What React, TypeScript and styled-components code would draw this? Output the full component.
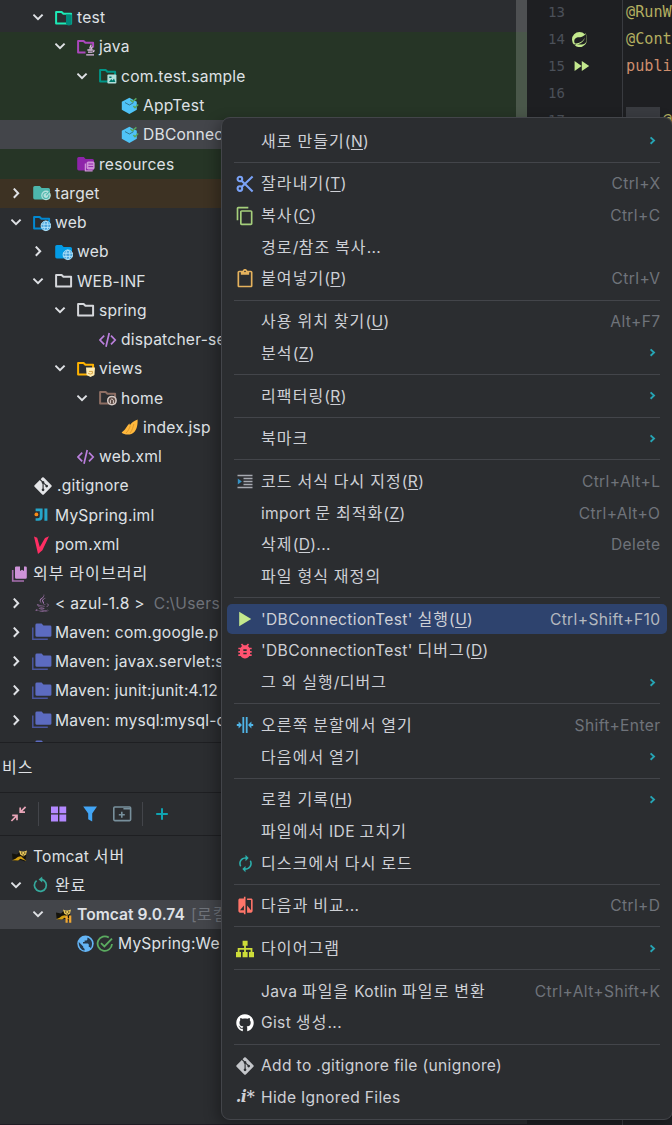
import React from 'react';
import styled, { createGlobalStyle, ThemeProvider } from 'styled-components';
import { MdAutorenew, MdBugReport, MdCompare, MdContentCopy, MdContentPaste } from 'react-icons/md';
import { FaGitAlt, FaGithub, FaJava } from 'react-icons/fa';
import { SiSpring } from 'react-icons/si';

const theme = {
  panel: '#2b2d30',
  editor: '#1e1f22',
  line: '#1e1f22',
  border: '#43454a',
  text: '#dfe1e5',
  menuText: '#ced0d6',
  muted: '#6f737a',
  selected: '#43454a',
  highlight: '#2e436e',
  test: '#263526',
  excluded: '#3d3223',
};

const GlobalStyle = createGlobalStyle`
  body {
    margin: 0;
    background: #1e1f22;
    overflow: hidden;
  }

  * {
    box-sizing: border-box;
  }

  svg {
    display: block;
    flex: none;
  }
`;

const Window = styled.div`
  position: relative;
  display: grid;
  grid-template-columns: 527px 1fr;
  width: 672px;
  height: 1125px;
  overflow: hidden;
  background: ${props => props.theme.panel};
  color: ${props => props.theme.text};
  font-family: Inter, 'Noto Sans CJK KR', sans-serif;
  font-size: 15.6px;
`;

const SideBar = styled.div`
  display: flex;
  flex-direction: column;
  min-width: 0;
  background: ${props => props.theme.panel};
  border-bottom: 1px solid #201c24;
`;

const Project = styled.div`
  display: flex;
  height: 743px;
  overflow: hidden;
  border-bottom: 1px solid ${props => props.theme.line};
`;

const Tree = styled.div`
  flex: 1;
  padding-top: 3.1px;
`;

const ScrollBar = styled.div`
  width: 11px;
  margin-left: -11px;
  background: rgba(255, 255, 255, 0.17);
`;

const tints = {
  none: 'transparent',
  test: theme.test,
  excluded: theme.excluded,
  selected: theme.selected,
};

const TreeRow = styled.div<{ $level: number; $tint: keyof typeof tints }>`
  display: flex;
  align-items: center;
  height: 29.28px;
  padding-left: ${props => 11 + 22 * Math.max(props.$level - 1, 0)}px;
  background: ${props => tints[props.$tint]};
  white-space: nowrap;
`;

const Arrow = styled.span`
  display: flex;
  flex: none;
  width: 22px;
`;

const IconSlot = styled.span`
  display: flex;
  align-items: center;
  flex: none;
  gap: 2px;
  min-width: 18px;
  margin-right: 4px;
`;

const TreeText = styled.span<{ $bold?: boolean }>`
  font-weight: ${props => (props.$bold ? 600 : 400)};
  letter-spacing: ${props => (props.$bold ? 0.05 : 0.22)}px;
`;

const Hint = styled.span<{ $tight?: boolean }>`
  margin-left: ${props => (props.$tight ? 6 : 9)}px;
  color: ${props => props.theme.muted};
  letter-spacing: 0.4px;
`;

const Hangul = styled.span`
  font-family: 'Noto Sans CJK KR', sans-serif;
  font-size: 16px;
  line-height: 1;
  letter-spacing: 1.1px;
`;

const Services = styled.div`
  flex: 1;
`;

const ServicesTitle = styled.div`
  display: flex;
  align-items: center;
  height: 50px;
  padding: 0 0 3px 2px;
  border-bottom: 1px solid ${props => props.theme.line};
`;

const ServicesTools = styled.div`
  display: flex;
  align-items: center;
  height: 43px;
  padding-left: 10px;
  margin-bottom: 5.4px;
  border-bottom: 1px solid ${props => props.theme.line};
`;

const Tool = styled.span<{ $gap: number }>`
  display: flex;
  width: 18px;
  margin-right: ${props => props.$gap}px;
`;

const Separator = styled.span<{ $gap: number }>`
  width: 1px;
  height: 24px;
  margin-right: ${props => props.$gap}px;
  background: ${props => props.theme.border};
`;

const Editor = styled.div`
  display: grid;
  grid-template-columns: 96px 1fr;
  background: ${props => props.theme.editor};
  font-family: 'DejaVu Sans Mono', monospace;
`;

const Gutter = styled.div`
  padding-left: 21px;
  border-right: 1px solid #393b40;
  color: #4b5059;
  font-size: 14px;
`;

const GutterRow = styled.div`
  display: flex;
  align-items: center;
  gap: 7px;
  height: 26.8px;
  padding-bottom: 2px;
`;

const Code = styled.div`
  overflow: hidden;
  padding-left: 3px;
  font-size: 15.2px;
  white-space: pre;
`;

const CodeRow = styled.div<{ $color?: string }>`
  display: flex;
  align-items: center;
  height: 26.8px;
  padding-bottom: 2px;
  color: ${props => props.$color};
`;

const Inlay = styled.span`
  width: 37px;
  height: 26px;
  margin-right: 3px;
  background: #393b40;
`;

const Menu = styled.div`
  position: absolute;
  top: 117px;
  left: 221px;
  display: flex;
  flex-direction: column;
  width: 452px;
  height: 1003px;
  padding: 7.1px 5px 6px;
  border: 1px solid ${props => props.theme.border};
  border-radius: 9px;
  background: ${props => props.theme.panel};
  color: ${props => props.theme.menuText};
  box-shadow: -4px 4px 14px rgba(0, 0, 0, 0.3);
`;

const MenuRow = styled.div<{ $active?: boolean }>`
  display: flex;
  align-items: center;
  flex: none;
  height: 29.3px;
  margin: 1.2px 0;
  padding: 0.5px 7px 0 9px;
  border-radius: 5px;
  background: ${props => (props.$active ? props.theme.highlight : 'transparent')};
  white-space: nowrap;
`;

const MenuIcon = styled.span`
  display: flex;
  align-items: center;
  justify-content: center;
  width: 18px;
  margin-right: 7px;
`;

const MenuText = styled.span`
  flex: 1;
  letter-spacing: 0.34px;
`;

const Shortcut = styled.span<{ $active?: boolean }>`
  margin-right: -0.4px;
  color: ${props => (props.$active ? '#b4b8bf' : props.theme.muted)};
  letter-spacing: 0.36px;
`;

const Divider = styled.div`
  flex: none;
  height: 1px;
  margin: 5.04px 7px;
  background: ${props => props.theme.border};
`;

const Underlined = styled.span`
  text-decoration: underline;
  text-underline-offset: 2px;
`;

// "_N_" marks a mnemonic, runs of Hangul get their own face
const Label = ({ text }: { text: string }) => (
  <>
    {text.split(/(_[A-Z]_|[가-힣]+)/).map((part, i) => {
      if (/^_[A-Z]_$/.test(part)) return <Underlined key={i}>{part[1]}</Underlined>;
      if (/^[가-힣]/.test(part)) return <Hangul key={i}>{part}</Hangul>;
      return part;
    })}
  </>
);

const Chevron = ({ open }: { open: boolean }) => (
  <svg width="11" height="11" viewBox="0 0 11 11" fill="none" stroke="#dfe1e5" strokeWidth="2">
    <path d={open ? 'M0.4 2.6 L5 7.2 L9.6 2.6' : 'M2.8 0.6 L7.2 5.2 L2.8 9.8'} />
  </svg>
);

const Folder = ({ color, filled, children }: { color: string; filled?: boolean; children?: React.ReactNode }) => (
  <svg width="18" height="18" viewBox="0 0 18 18">
    {filled ? (
      <path d="M1.8 2H6.8L8.6 3.9H15.4Q17 3.9 17 5.4V13.8Q17 15.4 15.4 15.4H1.8Q0.2 15.4 0.2 13.8V3.6Q0.2 2 1.8 2Z" fill={color} />
    ) : (
      <path d="M1.1 3H6.6L8.4 4.8H16.1V14.5H1.1Z" fill="none" stroke={color} strokeWidth="2" strokeLinejoin="round" />
    )}
    {children}
  </svg>
);

const Globe = () => (
  <g fill="none" stroke="#b3e5fc" strokeWidth="0.9">
    <circle cx="12.9" cy="11.8" r="4.8" fill="#4aa3dc" />
    <ellipse cx="12.9" cy="11.8" rx="2" ry="4.8" />
    <path d="M8.4 10.2H17.4M8.4 13.4H17.4" />
  </g>
);

const TestFolder = () => (
  <Folder color="#1de9b6">
    <path d="M11 5.6H16.8V14.6Q16.8 16.4 13.9 16.4Q11 16.4 11 14.6Z" fill="#00897b" />
  </Folder>
);

const JavaFolder = () => (
  <Folder color="#ab47bc">
    <path d="M8.5 9.6H18V18H8.5Z" fill="#263526" />
    <path d="M13.8 6.5C15 8.2 11.6 9 13.4 11M15.6 8.6C14 9.6 14.6 10 14.8 11M10.4 12H15.8M11 14.2H15.6M9.2 16.8H17M16.4 12.2Q17.8 12.6 16 14" fill="none" stroke="#e1bee7" strokeWidth="1.3" />
  </Folder>
);

const PackageFolder = () => (
  <Folder color="#009688">
    <rect x="8.4" y="7.6" width="9" height="9" rx="1" fill="#b2dfdb" />
    <path d="M10 15L12.2 12L13.6 13.6L15 11.4L16.4 15ZM10.3 9.5H12.5V11H10.3Z" fill="#00796b" />
  </Folder>
);

const ResourcesFolder = () => (
  <Folder color="#8e24aa" filled>
    <rect x="9.6" y="6.4" width="8" height="8" rx="1.6" fill="#ce93d8" />
    <path d="M11.4 9H16.2M11.4 11.6H16.2" stroke="#8e24aa" strokeWidth="1" />
    <path d="M8.4 8.6V15.8H15.6" fill="none" stroke="#ce93d8" strokeWidth="1.3" />
  </Folder>
);

const TargetFolder = () => (
  <Folder color="#4db6ac" filled>
    <circle cx="13" cy="11.4" r="4.8" fill="#b2dfdb" />
    <path d="M15.8 10.6A3 3 0 1 1 13.6 8.6M13 11.4L17 7.2" fill="none" stroke="#4db6ac" strokeWidth="1.1" />
  </Folder>
);

const ViewsFolder = () => (
  <Folder color="#ffb300">
    <path d="M9 7.6H18L17.4 15L13.5 17L9.6 15Z" fill="#ffecb3" />
    <path d="M11.2 13.4Q13.5 14.8 15.4 13.4V11.4H12" fill="none" stroke="#d9a441" strokeWidth="1" />
  </Folder>
);

const HomeFolder = () => (
  <Folder color="#8d6e63">
    <circle cx="12.9" cy="11.6" r="4.2" fill="#5d4b45" stroke="#d7ccc8" strokeWidth="1.5" />
    <path d="M11.4 14.4V11.2L12.9 9.8L14.4 11.2V14.4" fill="none" stroke="#d7ccc8" strokeWidth="1" />
  </Folder>
);

const ClassIcon = () => (
  <svg width="18" height="18" viewBox="0 0 18 18">
    <path d="M8.4 0.8L15.8 4.8V12.8L8.4 17L0.8 12.8V4.8Z" fill="#4fc3f7" />
    <path d="M4 5.6L8.4 8L12.6 5.6" fill="none" stroke="#2f6f86" strokeWidth="0.9" />
    <path d="M9.4 3L11.4 4.8L15.4 1.4M12.4 9L14 10.8L17.2 7.6" fill="none" stroke="#58a65c" strokeWidth="1.4" />
  </svg>
);

const XmlIcon = () => (
  <svg width="18" height="18" viewBox="0 0 18 18" fill="none" stroke="#ba7fdc" strokeWidth="1.7">
    <path d="M5.2 4.6L1 9L5.2 13.4M12 4.6L16.2 9L12 13.4M10.2 2L7 15.8" />
  </svg>
);

const JspIcon = () => (
  <svg width="18" height="18" viewBox="0 0 18 18">
    <path d="M0.6 14.4C5 12 5 8.4 8.6 5.6L8.8 7.2C10.6 4.8 12.6 3 16.6 1.4C16.8 8 15.6 13.4 10.4 16C6.6 17.2 2.6 16.4 0.6 14.4Z" fill="#ffb83d" />
    <path d="M5 15C7.5 12.8 8.4 10 9.4 7.6M9 15C11.6 12 12 9 12.8 6" fill="none" stroke="#d58c1f" strokeWidth="0.7" />
  </svg>
);

const ImlIcon = () => (
  <svg width="18" height="18" viewBox="0 0 18 18">
    <path d="M2.6 2.6H9.6V10.6Q9.6 14.8 5.6 14.8H2.6V12.2H5Q6.8 12.2 6.8 10V5.2H2.6ZM11.4 2.6H14.4V14.8H11.4Z" fill="#26a6c9" />
    <circle cx="3.4" cy="8.4" r="1.9" fill="#f98b17" />
  </svg>
);

const MavenIcon = () => (
  <svg width="18" height="18" viewBox="0 0 18 18">
    <path d="M1 0.4L4.2 1.8L6.8 11L12 2L16 0.2L9.4 14.2L5 18Z" fill="#ff2e63" />
  </svg>
);

const LibraryIcon = () => (
  <svg width="18" height="18" viewBox="0 0 18 18">
    <path d="M1.7 5V16H13" fill="none" stroke="#a86fb0" strokeWidth="1.6" />
    <path d="M5.2 1.4H9V6L11 4.8L13 6V1.4H14.6Q15.8 1.4 15.8 2.6V12.6Q15.8 13.8 14.6 13.8H5.2Q4 13.8 4 12.6V2.6Q4 1.4 5.2 1.4Z" fill="#ce93d8" />
  </svg>
);

const JarSvg = styled.svg`
  margin: 0 -1px;
`;

const JarIcon = () => (
  <JarSvg width="20" height="18" viewBox="0 0 20 18">
    <path d="M0.8 4.6V16.2H15.8" fill="none" stroke="#4a559f" strokeWidth="1.5" />
    <path d="M5 0.6H9.6L11.4 2.4H18Q19.4 2.4 19.4 3.8V12.4Q19.4 13.8 18 13.8H5Q3.4 13.8 3.4 12.4V2Q3.4 0.6 5 0.6Z" fill="#5c6bc0" />
  </JarSvg>
);

const TomcatIcon = ({ paused }: { paused?: boolean }) => (
  <svg width="18" height="18" viewBox="0 0 18 18">
    <path d="M1 6.4L6 7.4L9 4.6L15.4 8.6L14 14.4L9.6 13L4 13.8L1.6 12.6Z" fill="#15130c" />
    <path d="M1 13.2C5 12.4 6 9.2 10 9.2L15.4 14L9.4 11.8L7.2 13.4Z" fill="#d3a012" />
    <path d="M8 3.6L10.4 4.4H13.2L16 3.4L15 7.4L12.2 9.6L9.2 7.4Z" fill="#e9c85c" />
    <path d="M10 6H11.4M13 6H14.4M11.6 8H13" stroke="#2a2410" strokeWidth="1.1" />
    {paused && <path d="M11.6 9.4V16.8M15.2 9.4V16.8" stroke="#f0a732" strokeWidth="2.2" />}
  </svg>
);

const DoneIcon = () => (
  <svg width="18" height="18" viewBox="0 0 18 18" fill="none" stroke="#35a99c" strokeWidth="1.7">
    <path d="M3.6 4.6A6 6 0 1 0 8.6 3.4H9.8" />
    <path d="M9.2 0.4V6.4L5.6 3.4Z" fill="#35a99c" stroke="none" />
  </svg>
);

const WebIcon = () => (
  <svg width="17" height="18" viewBox="0 0 17 18">
    <circle cx="8.5" cy="8.8" r="8.2" fill="#64b5f6" />
    <path d="M1.8 7L6.2 11.4V12.6L7.6 14V15.6C4 15.2 1.4 11 1.8 7ZM10.4 2.6C15 4.2 16.4 9 13.8 13.4C13.4 12.4 12.8 12 11.8 12V9.4L11 8.6H6V7H7.6V5.4H9.4Q10.4 5.2 10.4 4.2Z" fill="#26384a" />
  </svg>
);

const CheckIcon = () => (
  <svg width="18" height="18" viewBox="0 0 18 18" fill="none" stroke="#5bab60" strokeWidth="1.8">
    <path d="M12.8 2.6A7.2 7.2 0 1 0 16 9M5 8.2L8.4 11.4L16 3.6" />
  </svg>
);

const GitIcon = ({ color }: { color: string }) => <FaGitAlt size={20} color={color} />;

const CutIcon = () => (
  <svg width="18" height="18" viewBox="0 0 18 18" fill="none" stroke="#7aa2f7" strokeWidth="2.1">
    <circle cx="3.9" cy="4" r="2.3" />
    <circle cx="3.9" cy="13.6" r="2.3" />
    <path d="M5.6 5.8L16.6 16.4M5.6 12L16.6 1.6" />
  </svg>
);

const ReformatIcon = () => (
  <svg width="16" height="16" viewBox="0 0 16 16">
    <path d="M0.5 1.5H15.5M6.5 4.5H15.5M6.5 7.5H15.5M6.5 10.5H15.5M0.5 13.5H15.5" stroke="#a6a9b0" strokeWidth="1.5" />
    <path d="M0.8 4.4L4.8 7.5L0.8 10.6Z" fill="#3592c4" />
  </svg>
);

const RunIcon = () => (
  <svg width="18" height="18" viewBox="0 0 18 18">
    <path d="M3.2 1.8L15.2 9L3.2 16.2Z" fill="#c3e88d" />
  </svg>
);

const SplitIcon = () => (
  <svg width="18" height="18" viewBox="0 0 18 18" fill="#4fb4e6">
    <path d="M6.4 1H8.2V17H6.4ZM9.8 1H11.6V17H9.8ZM0.8 8.1H2.6V5.6L6 9L2.6 12.4V9.9H0.8ZM17.2 8.1H15.4V5.6L12 9L15.4 12.4V9.9H17.2Z" />
  </svg>
);

const DiagramIcon = () => (
  <svg width="18" height="18" viewBox="0 0 18 18">
    <path d="M6.6 0.8H11.6V5.8H6.6ZM0 12H5V17.2H0ZM6.6 12H11.6V17.2H6.6ZM13 12H18V17.2H13Z" fill="#cddc39" />
    <path d="M9 5V12M2.6 12V8.8H15.5V12" fill="none" stroke="#cddc39" strokeWidth="1.8" />
  </svg>
);

const IgnoredIcon = styled.span`
  font: italic bold 16px 'DejaVu Serif', serif;
  line-height: 1;
  letter-spacing: -0.5px;
`;

const SubmenuArrow = () => (
  <svg width="12" height="12" viewBox="0 0 12 12" fill="none" stroke="#26a5b5" strokeWidth="1.9">
    <path d="M2.6 2.4L6 5.6L2.6 8.8" />
  </svg>
);

type Node = {
  level: number;
  text: string;
  icon: React.ReactNode;
  open?: boolean;
  tint?: keyof typeof tints;
  hint?: string;
  bold?: boolean;
};

const projectNodes: Node[] = [
  { level: 2, text: 'test', icon: <TestFolder />, open: true },
  { level: 3, text: 'java', icon: <JavaFolder />, open: true, tint: 'test' },
  { level: 4, text: 'com.test.sample', icon: <PackageFolder />, open: true, tint: 'test' },
  { level: 5, text: 'AppTest', icon: <ClassIcon />, tint: 'test' },
  { level: 5, text: 'DBConnec', icon: <ClassIcon />, tint: 'selected' },
  { level: 3, text: 'resources', icon: <ResourcesFolder />, tint: 'test' },
  { level: 1, text: 'target', icon: <TargetFolder />, open: false, tint: 'excluded' },
  { level: 1, text: 'web', icon: <Folder color="#0288d1"><Globe /></Folder>, open: true },
  { level: 2, text: 'web', icon: <Folder color="#039be5" filled><Globe /></Folder>, open: false },
  { level: 2, text: 'WEB-INF', icon: <Folder color="#d5d7db" />, open: true },
  { level: 3, text: 'spring', icon: <Folder color="#d5d7db" />, open: true },
  { level: 4, text: 'dispatcher-se', icon: <XmlIcon /> },
  { level: 3, text: 'views', icon: <ViewsFolder />, open: true },
  { level: 4, text: 'home', icon: <HomeFolder />, open: true },
  { level: 5, text: 'index.jsp', icon: <JspIcon /> },
  { level: 3, text: 'web.xml', icon: <XmlIcon /> },
  { level: 1, text: '.gitignore', icon: <GitIcon color="#e4e5e8" /> },
  { level: 1, text: 'MySpring.iml', icon: <ImlIcon /> },
  { level: 1, text: 'pom.xml', icon: <MavenIcon /> },
  { level: 0, text: '외부 라이브러리', icon: <LibraryIcon /> },
  { level: 1, text: '< azul-1.8 >', icon: <FaJava size={18} color="#a878b4" />, open: false, hint: 'C:\\Users' },
  { level: 1, text: 'Maven: com.google.p', icon: <JarIcon />, open: false },
  { level: 1, text: 'Maven: javax.servlet:s', icon: <JarIcon />, open: false },
  { level: 1, text: 'Maven: junit:junit:4.12', icon: <JarIcon />, open: false },
  { level: 1, text: 'Maven: mysql:mysql-c', icon: <JarIcon />, open: false },
  { level: 1, text: '', icon: <JarIcon /> },
];

const serviceNodes: Node[] = [
  { level: 0, text: 'Tomcat 서버', icon: <TomcatIcon /> },
  { level: 1, text: '완료', icon: <DoneIcon />, open: true },
  { level: 2, text: 'Tomcat 9.0.74', icon: <TomcatIcon paused />, open: true, tint: 'selected', bold: true, hint: '[로컬' },
  { level: 3, text: 'MySpring:We', icon: <><WebIcon /><CheckIcon /></> },
];

const Nodes = ({ nodes }: { nodes: Node[] }) => (
  <>
    {nodes.map((node, i) => (
      <TreeRow key={i} $level={node.level} $tint={node.tint || 'none'}>
        {node.level > 0 && <Arrow>{node.open !== undefined && <Chevron open={node.open} />}</Arrow>}
        <IconSlot>{node.icon}</IconSlot>
        <TreeText $bold={node.bold}>
          <Label text={node.text} />
        </TreeText>
        {node.hint && (
          <Hint $tight={node.bold}>
            <Label text={node.hint} />
          </Hint>
        )}
      </TreeRow>
    ))}
  </>
);

type Item = { text: string; icon?: React.ReactNode; keys?: string; submenu?: boolean; active?: boolean };

const menuGroups: Item[][] = [
  [{ text: '새로 만들기(_N_)', submenu: true }],
  [
    { text: '잘라내기(_T_)', icon: <CutIcon />, keys: 'Ctrl+X' },
    { text: '복사(_C_)', icon: <MdContentCopy size={20} color="#a5cf7b" />, keys: 'Ctrl+C' },
    { text: '경로/참조 복사...' },
    { text: '붙여넣기(_P_)', icon: <MdContentPaste size={20} color="#e5b25d" />, keys: 'Ctrl+V' },
  ],
  [
    { text: '사용 위치 찾기(_U_)', keys: 'Alt+F7' },
    { text: '분석(_Z_)', submenu: true },
  ],
  [{ text: '리팩터링(_R_)', submenu: true }],
  [{ text: '북마크', submenu: true }],
  [
    { text: '코드 서식 다시 지정(_R_)', icon: <ReformatIcon />, keys: 'Ctrl+Alt+L' },
    { text: 'import 문 최적화(_Z_)', keys: 'Ctrl+Alt+O' },
    { text: '삭제(_D_)...', keys: 'Delete' },
    { text: '파일 형식 재정의' },
  ],
  [
    { text: "'DBConnectionTest' 실행(_U_)", icon: <RunIcon />, keys: 'Ctrl+Shift+F10', active: true },
    { text: "'DBConnectionTest' 디버그(_D_)", icon: <MdBugReport size={20} color="#ff5370" /> },
    { text: '그 외 실행/디버그', submenu: true },
  ],
  [
    { text: '오른쪽 분할에서 열기', icon: <SplitIcon />, keys: 'Shift+Enter' },
    { text: '다음에서 열기', submenu: true },
  ],
  [
    { text: '로컬 기록(_H_)', submenu: true },
    { text: '파일에서 IDE 고치기' },
    { text: '디스크에서 다시 로드', icon: <MdAutorenew size={19} color="#2bb0ad" /> },
  ],
  [{ text: '다음과 비교...', icon: <MdCompare size={19} color="#ff7569" />, keys: 'Ctrl+D' }],
  [{ text: '다이어그램', icon: <DiagramIcon />, submenu: true }],
  [
    { text: 'Java 파일을 Kotlin 파일로 변환', keys: 'Ctrl+Alt+Shift+K' },
    { text: 'Gist 생성...', icon: <FaGithub size={18} color="#ffffff" /> },
  ],
  [
    { text: 'Add to .gitignore file (unignore)', icon: <GitIcon color="#c4c6ca" /> },
    { text: 'Hide Ignored Files', icon: <IgnoredIcon>.i*</IgnoredIcon> },
  ],
];

const ContextMenu = () => (
  <Menu>
    {menuGroups.map((group, i) => (
      <React.Fragment key={i}>
        {i > 0 && <Divider />}
        {group.map(item => (
          <MenuRow key={item.text} $active={item.active}>
            <MenuIcon>{item.icon}</MenuIcon>
            <MenuText>
              <Label text={item.text} />
            </MenuText>
            {item.keys && <Shortcut $active={item.active}>{item.keys}</Shortcut>}
            {item.submenu && <SubmenuArrow />}
          </MenuRow>
        ))}
      </React.Fragment>
    ))}
  </Menu>
);

const App = () => (
  <ThemeProvider theme={theme}>
    <GlobalStyle />
    <Window>
      <SideBar>
        <Project>
          <Tree>
            <Nodes nodes={projectNodes} />
          </Tree>
          <ScrollBar />
        </Project>
        <Services>
          <ServicesTitle>
            <Label text="비스" />
          </ServicesTitle>
          <ServicesTools>
            <Tool $gap={10}>
              <svg width="18" height="18" viewBox="0 0 18 18" fill="none" stroke="#e8a5b8" strokeWidth="1.7">
                <path d="M15.6 1.8L10.6 6.8M10.2 2.4V7.2H15M1.4 16L6.6 10.8M2.2 10.4H7V15.2" />
              </svg>
            </Tool>
            <Separator $gap={11} />
            <Tool $gap={14}>
              <svg width="18" height="18" viewBox="0 0 18 18" fill="#b388ff">
                <path d="M1 1.4H8V8.2H1ZM9.4 1.4H16.2V8.2H9.4ZM1 9.6H8V16.4H1ZM9.4 9.6H16.2V16.4H9.4Z" />
              </svg>
            </Tool>
            <Tool $gap={13}>
              <svg width="18" height="18" viewBox="0 0 18 18" fill="#42a5f5">
                <path d="M1.2 1.6H15L10.2 8.4V16.4L6.2 14.2V8.4Z" />
              </svg>
            </Tool>
            <Tool $gap={11}>
              <svg width="19" height="18" viewBox="0 0 19 18" fill="none" stroke="#78909c" strokeWidth="1.6">
                <rect x="0.8" y="2" width="16.8" height="13.6" rx="1" />
                <path d="M10.4 3.8H17.4M8.8 6.8V12.8M5.8 9.8H11.8" />
              </svg>
            </Tool>
            <Separator $gap={10} />
            <Tool $gap={0}>
              <svg width="18" height="18" viewBox="0 0 18 18" stroke="#0fa3b1" strokeWidth="2">
                <path d="M9 3.2V14.8M3.2 9H14.8" />
              </svg>
            </Tool>
          </ServicesTools>
          <Nodes nodes={serviceNodes} />
        </Services>
      </SideBar>
      <Editor>
        <Gutter>
          <GutterRow>13</GutterRow>
          <GutterRow>
            14
            <SiSpring size={15} color="#c3e88d" />
          </GutterRow>
          <GutterRow>
            15
            <svg width="18" height="14" viewBox="0 0 18 14" fill="#c3e88d">
              <path d="M2.6 2L9.6 7L2.6 12ZM9.8 2L17.2 7L9.8 12Z" />
            </svg>
          </GutterRow>
          <GutterRow>16</GutterRow>
          <GutterRow>17</GutterRow>
        </Gutter>
        <Code>
          <CodeRow $color="#b3ae60">@RunWith</CodeRow>
          <CodeRow $color="#b3ae60">@Context</CodeRow>
          <CodeRow $color="#cf8e6d">public</CodeRow>
          <CodeRow />
          <CodeRow $color="#b3ae60">
            <Inlay />@
          </CodeRow>
        </Code>
      </Editor>
      <ContextMenu />
    </Window>
  </ThemeProvider>
);

export default App;
